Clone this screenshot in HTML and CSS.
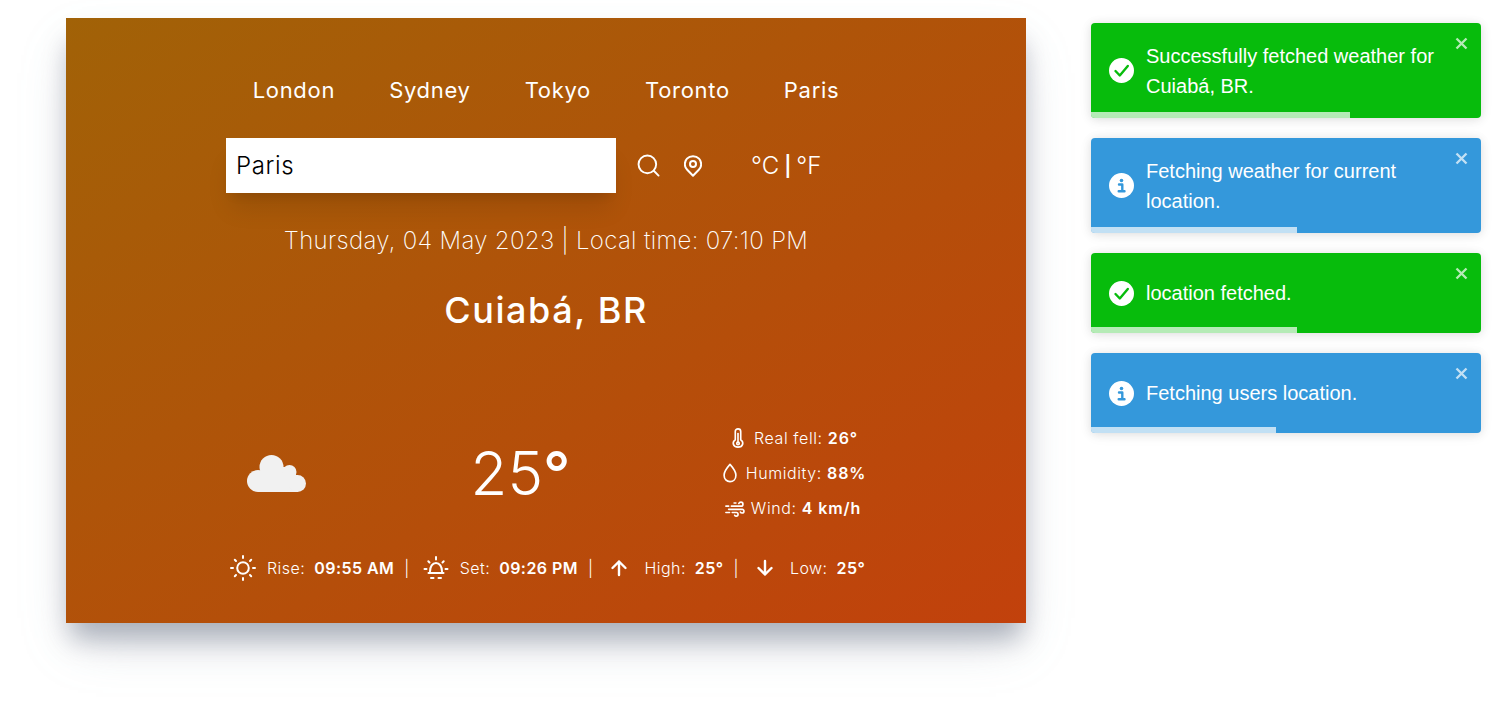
FILE: index.html
```html
<!DOCTYPE html>
<html lang="en">
<head>
    <meta charset="UTF-8">
    <meta name="viewport" content="width=device-width, initial-scale=1.0">
    <title>Weather</title>
    <link rel="stylesheet" href="styles.css">
</head>
<body>
    <main class="card">
        <nav class="cities">
            <button>London</button>
            <button>Sydney</button>
            <button>Tokyo</button>
            <button>Toronto</button>
            <button>Paris</button>
        </nav>

        <div class="search-row">
            <input class="search-input" type="text" value="Paris">
            <svg class="search-icon" viewBox="0 0 24 24"><circle cx="10.8" cy="10.8" r="9.2"/><path d="M17.5 17.5L22.5 22.5"/></svg>
            <svg class="pin-icon" viewBox="0 0 18 22"><path d="M9 20.8L3.2 14.8C-0.2 11.4 0.4 6.4 3 3.6C6 0.4 12 0.4 15 3.6C17.6 6.4 18.2 11.4 14.8 14.8Z"/><circle cx="9" cy="9" r="3"/></svg>
            <div class="units">
                <span>°C</span>
                <span class="units-sep">|</span>
                <span>°F</span>
            </div>
        </div>

        <p class="date">Thursday, 04 May 2023 | Local time: 07:10 PM</p>
        <h1 class="city">Cuiabá, BR</h1>

        <div class="current">
            <svg class="cloud" viewBox="0 0 60 38">
                <rect x="11" y="20" width="40" height="17"/>
                <rect x="24" y="12" width="20" height="10"/>
                <circle cx="11" cy="26" r="11"/>
                <circle cx="24.500" cy="12" r="12"/>
                <circle cx="42.500" cy="17" r="7"/>
                <circle cx="50.500" cy="28.500" r="8.500"/>
            </svg>
            <div class="temp">25<span class="temp-deg">°</span></div>
            <ul class="details">
                <li>
                    <svg class="icon" viewBox="0 0 20 22"><path d="M7 13V3.800C7 2.200 8.300 1 10 1C11.700 1 13 2.200 13 3.800V13C15 14.300 15.600 16 15.100 17.800C14.500 19.800 12.500 21 10 21C7.500 21 5.500 19.800 4.900 17.800C4.400 16 5 14.300 7 13Z"/><path d="M10 6V15"/><circle cx="10" cy="17" r="1.400"/></svg>
                    <span>Real fell: <b>26°</b></span>
                </li>
                <li>
                    <svg class="icon" viewBox="0 0 20 22"><path d="M10 1.500C14.500 6.500 16.500 9.500 16.500 13.500C16.500 17.800 13.600 20.500 10 20.500C6.400 20.500 3.500 17.800 3.500 13.500C3.500 9.500 5.500 6.500 10 1.500Z"/></svg>
                    <span>Humidity: <b>88%</b></span>
                </li>
                <li>
                    <svg class="icon" viewBox="0 0 22 22"><path d="M7 9H17.500C20.500 9 20.500 4.500 17.500 4.500C16.200 4.500 15.500 5.200 15.200 6M4 12.500H19C21.500 12.500 21.500 16.500 18.800 16.500C18 16.500 17.300 16.200 17 15.500M8 16H12.500C15 16 15 20 12.500 20C11.500 20 11 19.600 10.700 19M10 5.500H12M1 9H4M1 16H5"/></svg>
                    <span>Wind: <b>4 km/h</b></span>
                </li>
            </ul>
        </div>

        <div class="stats">
            <svg class="icon-lg" viewBox="0 0 26 26"><circle cx="13" cy="13" r="5.800"/><path d="M13 1V3M13 23V25M1 13H3M23 13H25M4.800 4.800L6 6M20 20L21.200 21.200M4.800 21.200L6 20M20 6L21.200 4.800"/></svg>
            <span class="stat-label">Rise:</span><b class="stat-value">09:55 AM</b><span class="stat-sep">|</span>
            <svg class="icon-lg" viewBox="0 0 26 26"><path d="M7 16.500C7 11.500 9.500 8 13 8C16.500 8 19 11.500 19 16.500M5.500 18H20.500M8 23H10.500M15.500 23H18M13 2V4.500M1.500 14H3.500M22.500 14H24.500M5.300 6.300L6.500 7.500M20.700 6.300L19.500 7.500"/></svg>
            <span class="stat-label">Set:</span><b class="stat-value">09:26 PM</b><span class="stat-sep">|</span>
            <svg class="icon-arrow" viewBox="0 0 18 18"><path d="M9 16V2.500M2.500 9L9 2.500L15.500 9"/></svg>
            <span class="stat-label">High:</span><b class="stat-value">25°</b><span class="stat-sep">|</span>
            <svg class="icon-arrow" viewBox="0 0 18 18"><path d="M9 2V15.500M2.500 9L9 15.500L15.500 9"/></svg>
            <span class="stat-label">Low:</span><b class="stat-value">25°</b>
        </div>
    </main>

    <aside class="toasts">
        <div class="toast toast-success toast-tall">
            <svg class="toast-icon" viewBox="0 0 25 25"><circle cx="12.500" cy="12.500" r="12.500"/><path class="toast-mark" d="M6.500 13L10.800 17.500L18.800 8"/></svg>
            <p>Successfully fetched weather for Cuiabá, BR.</p>
            <svg class="toast-close" viewBox="0 0 13 13"><path d="M1.500 1.500L11.500 11.500M11.500 1.500L1.500 11.500"/></svg>
            <div class="toast-progress" style="width: 259px"></div>
        </div>
        <div class="toast toast-info toast-tall">
            <svg class="toast-icon" viewBox="0 0 25 25"><circle cx="12.500" cy="12.500" r="12.500"/><circle class="toast-dot" cx="12.500" cy="7.500" r="1.800"/><path class="toast-mark" d="M10 11.500H13.300V18M9.700 18.300H15.500"/></svg>
            <p>Fetching weather for current location.</p>
            <svg class="toast-close" viewBox="0 0 13 13"><path d="M1.500 1.500L11.500 11.500M11.500 1.500L1.500 11.500"/></svg>
            <div class="toast-progress" style="width: 206px"></div>
        </div>
        <div class="toast toast-success">
            <svg class="toast-icon" viewBox="0 0 25 25"><circle cx="12.500" cy="12.500" r="12.500"/><path class="toast-mark" d="M6.500 13L10.800 17.500L18.800 8"/></svg>
            <p>location fetched.</p>
            <svg class="toast-close" viewBox="0 0 13 13"><path d="M1.500 1.500L11.500 11.500M11.500 1.500L1.500 11.500"/></svg>
            <div class="toast-progress" style="width: 206px"></div>
        </div>
        <div class="toast toast-info">
            <svg class="toast-icon" viewBox="0 0 25 25"><circle cx="12.500" cy="12.500" r="12.500"/><circle class="toast-dot" cx="12.500" cy="7.500" r="1.800"/><path class="toast-mark" d="M10 11.500H13.300V18M9.700 18.300H15.500"/></svg>
            <p>Fetching users location.</p>
            <svg class="toast-close" viewBox="0 0 13 13"><path d="M1.500 1.500L11.500 11.500M11.500 1.500L1.500 11.500"/></svg>
            <div class="toast-progress" style="width: 185px"></div>
        </div>
    </aside>
</body>
</html>
```

FILE: styles.css
```css
* {
    box-sizing: border-box;
}

body {
    margin: 0;
    height: 704px;
    overflow: hidden;
    display: flex;
    align-items: flex-start;
    font-family: Inter, "Noto Sans", sans-serif;
    background-color: #fff;
    color: #fff;
}

svg {
    display: block;
    fill: none;
    stroke: #fff;
    stroke-linecap: round;
    stroke-linejoin: round;
    flex-shrink: 0;
}

/* Weather card */
.card {
    width: 960px;
    height: 605px;
    margin: 18px 0 0 66px;
    padding: 56px 160px 0;
    background-image: linear-gradient(to bottom right, #a16207, #c2410c);
    box-shadow: 0 20px 25px -5px rgba(156, 163, 175, 0.8), 0 25px 50px -12px rgba(156, 163, 175, 0.4);
}

.cities {
    display: flex;
    justify-content: center;
    gap: 54px;
    height: 32px;
}

.cities button {
    padding: 0;
    border: none;
    background: none;
    color: #fff;
    font-family: inherit;
    font-size: 22px;
    line-height: 32px;
    letter-spacing: 0.7px;
}

.search-row {
    display: flex;
    align-items: center;
    height: 55px;
    margin-top: 32px;
}

.search-input {
    width: 390px;
    height: 55px;
    padding: 8px 10px;
    border: none;
    outline: none;
    font-family: inherit;
    font-size: 24px;
    font-weight: 300;
    letter-spacing: 0.6px;
    color: #000;
    box-shadow: 0 20px 25px -5px rgba(0, 0, 0, 0.1), 0 8px 10px -6px rgba(0, 0, 0, 0.1);
}

.search-icon {
    width: 23px;
    height: 23px;
    margin-left: 21px;
    stroke-width: 2;
}

.pin-icon {
    width: 18px;
    height: 22px;
    margin-left: 24px;
    stroke-width: 2;
}

.units {
    display: flex;
    align-items: center;
    gap: 5px;
    margin-left: 49px;
    font-size: 24px;
    font-weight: 300;
}

.units-sep {
    font-size: 20px;
    font-weight: 600;
}

.date {
    margin: 32px 0 0;
    text-align: center;
    font-size: 24px;
    font-weight: 200;
    line-height: 32px;
    letter-spacing: 0.32px;
}

.city {
    margin: 33px 0 0;
    text-align: center;
    font-size: 36px;
    font-weight: 500;
    line-height: 40px;
    letter-spacing: 1.6px;
}

/* Current conditions */
.current {
    display: flex;
    justify-content: space-between;
    align-items: center;
    height: 105px;
    margin-top: 90px;
}

.cloud {
    width: 60px;
    height: 38px;
    margin: 2px 0 0 21px;
    fill: #f1f1f1;
    stroke: none;
}

.temp {
    font-size: 60px;
    font-weight: 300;
    margin-left: 14px;
}

.temp-deg {
    font-weight: 500;
}

.details {
    list-style: none;
    margin: 0;
    padding: 0;
    width: 146px;
    font-size: 16px;
    font-weight: 350;
    letter-spacing: 0.6px;
}

.details li {
    display: flex;
    align-items: center;
    justify-content: center;
    gap: 6px;
    height: 35px;
    white-space: nowrap;
}

.details b {
    font-weight: 600;
    letter-spacing: 0.9px;
}

.icon {
    width: 20px;
    height: 20px;
    stroke-width: 1.800;
}

/* Bottom stats */
.stats {
    display: flex;
    align-items: center;
    height: 24px;
    margin-top: 31px;
    font-size: 16px;
    font-weight: 350;
    letter-spacing: 0.45px;
    white-space: nowrap;
}

.icon-lg {
    width: 26px;
    height: 26px;
    margin: 0 11px 0 4px;
    stroke-width: 2;
}

.stat-sep + .icon-lg {
    margin-left: 9px;
}

.icon-arrow {
    width: 18px;
    height: 18px;
    margin: 0 16px 0 13px;
    stroke-width: 2.400;
}

.stat-value {
    margin-left: 9px;
    font-weight: 600;
}

.stat-sep {
    margin: 0 4px 0 10px;
}

/* Toasts */
.toasts {
    display: flex;
    flex-direction: column;
    gap: 20px;
    width: 390px;
    margin: 23px 0 0 65px;
}

.toast {
    position: relative;
    display: flex;
    align-items: center;
    height: 80px;
    padding: 0 46px 0 18px;
    border-radius: 4px;
    overflow: hidden;
    font-family: "Liberation Sans", Arial, sans-serif;
    font-size: 20px;
    line-height: 30px;
    box-shadow: 0 1px 10px 0 rgba(0, 0, 0, 0.1), 0 2px 15px 0 rgba(0, 0, 0, 0.05);
}

.toast-tall {
    height: 95px;
}

.toast p {
    margin: 0 0 0 12px;
}

.toast-success {
    background-color: #07bc0c;
    --toast-color: #07bc0c;
}

.toast-info {
    background-color: #3498db;
    --toast-color: #3498db;
}

.toast-icon {
    width: 25px;
    height: 25px;
    fill: #fff;
    stroke: none;
}

.toast-mark {
    fill: none;
    stroke: var(--toast-color);
    stroke-width: 2.400;
}

.toast-dot {
    fill: var(--toast-color);
}

.toast-close {
    position: absolute;
    top: 14px;
    right: 13px;
    width: 13px;
    height: 13px;
    stroke-width: 2.400;
    stroke-linecap: butt;
    opacity: 0.7;
}

.toast-progress {
    position: absolute;
    left: 0;
    bottom: 0;
    height: 6px;
    background-color: rgba(255, 255, 255, 0.7);
}
```
